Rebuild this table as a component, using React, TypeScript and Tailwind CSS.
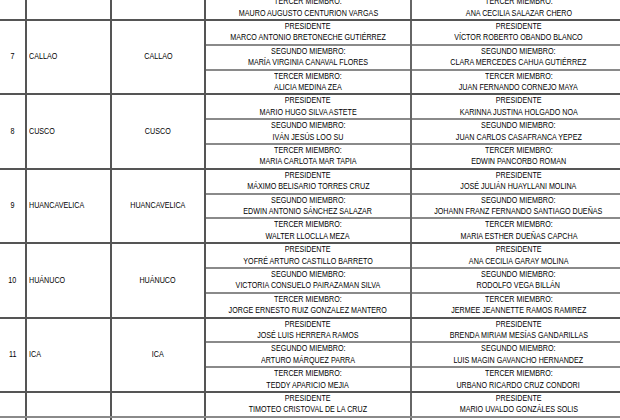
type Member = { label: string; titular: string; suplente: string };

interface Sala {
  no: string;
  departamento: string;
  provincia: string;
  miembros: Member[];
}

const P = "PRESIDENTE";
const S = "SEGUNDO MIEMBRO:";
const T = "TERCER MIEMBRO:";

const salas: Sala[] = [
  {
    no: "7",
    departamento: "CALLAO",
    provincia: "CALLAO",
    miembros: [
      { label: P, titular: "MARCO ANTONIO BRETONECHE GUTIÉRREZ", suplente: "VÍCTOR ROBERTO OBANDO BLANCO" },
      { label: S, titular: "MARÍA VIRGINIA CANAVAL FLORES", suplente: "CLARA MERCEDES CAHUA GUTIÉRREZ" },
      { label: T, titular: "ALICIA MEDINA ZEA", suplente: "JUAN FERNANDO CORNEJO MAYA" },
    ],
  },
  {
    no: "8",
    departamento: "CUSCO",
    provincia: "CUSCO",
    miembros: [
      { label: P, titular: "MARIO HUGO SILVA ASTETE", suplente: "KARINNA JUSTINA HOLGADO NOA" },
      { label: S, titular: "IVÁN JESÚS LOO SU", suplente: "JUAN CARLOS CASAFRANCA YEPEZ" },
      { label: T, titular: "MARIA CARLOTA MAR TAPIA", suplente: "EDWIN PANCORBO ROMAN" },
    ],
  },
  {
    no: "9",
    departamento: "HUANCAVELICA",
    provincia: "HUANCAVELICA",
    miembros: [
      { label: P, titular: "MÁXIMO BELISARIO TORRES CRUZ", suplente: "JOSÉ JULIÁN HUAYLLANI MOLINA" },
      { label: S, titular: "EDWIN ANTONIO SÁNCHEZ SALAZAR", suplente: "JOHANN FRANZ FERNANDO SANTIAGO DUEÑAS" },
      { label: T, titular: "WALTER LLOCLLA MEZA", suplente: "MARIA ESTHER DUEÑAS CAPCHA" },
    ],
  },
  {
    no: "10",
    departamento: "HUÁNUCO",
    provincia: "HUÁNUCO",
    miembros: [
      { label: P, titular: "YOFRÉ ARTURO CASTILLO BARRETO", suplente: "ANA CECILIA GARAY MOLINA" },
      { label: S, titular: "VICTORIA CONSUELO PAIRAZAMAN SILVA", suplente: "RODOLFO VEGA BILLÁN" },
      { label: T, titular: "JORGE ERNESTO RUIZ GONZALEZ MANTERO", suplente: "JERMEE JEANNETTE RAMOS RAMIREZ" },
    ],
  },
  {
    no: "11",
    departamento: "ICA",
    provincia: "ICA",
    miembros: [
      { label: P, titular: "JOSÉ LUIS HERRERA RAMOS", suplente: "BRENDA MIRIAM MESÍAS GANDARILLAS" },
      { label: S, titular: "ARTURO MÁRQUEZ PARRA", suplente: "LUIS MAGIN GAVANCHO HERNANDEZ" },
      { label: T, titular: "TEDDY APARICIO MEJIA", suplente: "URBANO RICARDO CRUZ CONDORI" },
    ],
  },
];

// narrow text, like Arial Narrow in the source pdf
function Txt({ children, left }: { children: React.ReactNode; left?: boolean }) {
  return (
    <span
      className={`inline-block whitespace-nowrap scale-x-[0.77] ${left ? "origin-left" : "origin-center"}`}
    >
      {children}
    </span>
  );
}

function MemberCell({ label, name, last }: { label: string; name: string; last: boolean }) {
  return (
    <div
      className={`flex-1 flex flex-col justify-center items-center ${last ? "" : "border-b-2 border-[#8a8a8a]"}`}
    >
      <Txt>{label}</Txt>
      <Txt>{name}</Txt>
    </div>
  );
}

function SalaRow({ sala }: { sala: Sala }) {
  return (
    <div className="flex h-[74.4px] border-b-2 border-[#555]">
      <div className="w-[27px] shrink-0 border-r-2 border-[#555] flex items-center justify-center">
        <Txt>{sala.no}</Txt>
      </div>
      <div className="w-[85px] shrink-0 border-r-2 border-[#555] flex items-center pl-[2px]">
        <Txt left>{sala.departamento}</Txt>
      </div>
      <div className="w-[94px] shrink-0 border-r-2 border-[#555] flex items-center justify-center">
        <Txt>{sala.provincia}</Txt>
      </div>
      <div className="w-[206px] shrink-0 border-r-2 border-[#666] flex flex-col">
        {sala.miembros.map((m, i) => (
          <MemberCell key={i} label={m.label} name={m.titular} last={i === sala.miembros.length - 1} />
        ))}
      </div>
      <div className="w-[213px] shrink-0 flex flex-col">
        {sala.miembros.map((m, i) => (
          <MemberCell key={i} label={m.label} name={m.suplente} last={i === sala.miembros.length - 1} />
        ))}
      </div>
    </div>
  );
}

// an empty-left-column strip holding one member line (used for the cut rows)
function PartialRow({ label, titular, suplente }: Member) {
  return (
    <div className="flex h-[24.8px] border-b-2 border-[#555]">
      <div className="w-[27px] shrink-0 border-r-2 border-[#555]" />
      <div className="w-[85px] shrink-0 border-r-2 border-[#555]" />
      <div className="w-[94px] shrink-0 border-r-2 border-[#555]" />
      <div className="w-[206px] shrink-0 border-r-2 border-[#666] flex flex-col">
        <MemberCell label={label} name={titular} last />
      </div>
      <div className="w-[213px] shrink-0 flex flex-col">
        <MemberCell label={label} name={suplente} last />
      </div>
    </div>
  );
}

export default function App() {
  return (
    <div className="w-[620px] h-[420px] overflow-hidden bg-white text-black text-[9.3px] leading-[11.4px] font-['Liberation_Sans',Arial,sans-serif]">
      <div className="-mt-[3.8px]">
        {/* tail of sala 6 (CAJAMARCA) */}
        <PartialRow label={T} titular="MAURO AUGUSTO CENTURION VARGAS" suplente="ANA CECILIA SALAZAR CHERO" />
        {salas.map((s) => (
          <SalaRow key={s.no} sala={s} />
        ))}
        {/* start of sala 12, runs past the bottom */}
        <div className="h-[24.8px] flex border-b-2 border-[#8a8a8a]">
          <div className="w-[27px] shrink-0 border-r-2 border-[#555]" />
          <div className="w-[85px] shrink-0 border-r-2 border-[#555]" />
          <div className="w-[94px] shrink-0 border-r-2 border-[#555]" />
          <div className="w-[206px] shrink-0 border-r-2 border-[#666] flex flex-col">
            <MemberCell label={P} name="TIMOTEO CRISTOVAL DE LA CRUZ" last />
          </div>
          <div className="w-[213px] shrink-0 flex flex-col">
            <MemberCell label={P} name="MARIO UVALDO GONZÁLES SOLIS" last />
          </div>
        </div>
        <div className="h-[20px] flex">
          <div className="w-[27px] shrink-0 border-r-2 border-[#555]" />
          <div className="w-[85px] shrink-0 border-r-2 border-[#555]" />
          <div className="w-[94px] shrink-0 border-r-2 border-[#555]" />
          <div className="w-[206px] shrink-0 border-r-2 border-[#666]" />
        </div>
      </div>
    </div>
  );
}
